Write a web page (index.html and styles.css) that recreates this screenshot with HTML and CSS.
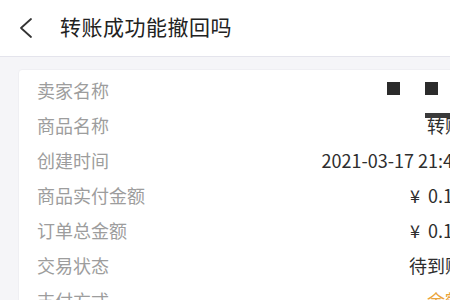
FILE: index.html
```html
<!DOCTYPE html>
<html lang="zh">
<head>
<meta charset="utf-8">
<link rel="stylesheet" href="styles.css">
</head>
<body>
<div class="page">
  <header class="topbar">
    <svg class="back" width="16" height="22" viewBox="0 0 16 22"><path d="M13 2 L3 11 L13 20" fill="none" stroke="#333" stroke-width="1.8" stroke-linecap="round" stroke-linejoin="round"/></svg>
    <h1 class="title">转账成功能撤回吗</h1>
  </header>
  <main class="content">
    <section class="card">
      <div class="row"><span class="label">卖家名称</span><span class="value redacted"><i class="sq"></i><i class="sq"></i><i class="sq"></i></span></div>
      <div class="row"><span class="label">商品名称</span><span class="value masked">转账</span></div>
      <div class="row"><span class="label">创建时间</span><span class="value">2021-03-17 21:45</span></div>
      <div class="row"><span class="label">商品实付金额</span><span class="value money">¥ 0.10</span></div>
      <div class="row"><span class="label">订单总金额</span><span class="value money">¥ 0.10</span></div>
      <div class="row"><span class="label">交易状态</span><span class="value">待到账</span></div>
      <div class="row"><span class="label">支付方式</span><span class="value accent">余额</span></div>
    </section>
  </main>
</div>
</body>
</html>
```

FILE: styles.css
```css
html, body {
  margin: 0;
  padding: 0;
  background: #f5f5f8;
}
.page {
  width: 450px;
  height: 300px;
  overflow: hidden;
  font-family: "Noto Sans CJK SC", "Noto Sans", sans-serif;
  background: #f5f5f8;
}
.topbar {
  height: 56px;
  background: #ffffff;
  border-bottom: 1px solid #e4e4ec;
  display: flex;
  align-items: center;
  padding-left: 18px;
}
.back {
  display: block;
  margin-top: -1px;
}
.title {
  margin: -3px 0 0 26px;
  font-size: 21px;
  font-weight: 400;
  color: #222;
  letter-spacing: 0.5px;
  line-height: 1;
}
.content {
  padding: 12px 0 0 18px;
}
.card {
  width: 464px;
  box-sizing: border-box;
  background: #fff;
  border: 1px solid #efeff3;
  border-radius: 4px;
  padding: 3px 18px 0 18px;
}
.row {
  display: flex;
  justify-content: space-between;
  align-items: center;
  height: 35px;
  font-size: 18px;
  line-height: 35px;
}
.label {
  color: #9d9d9d;
}
.value {
  color: #2e2e2e;
  white-space: nowrap;
}
.money {
  word-spacing: 4px;
}
.accent {
  color: #eaa43c;
}
.redacted {
  display: flex;
  gap: 25px;
  align-items: center;
  margin-top: -4px;
  margin-right: -13px;
}
.sq {
  display: block;
  width: 13px;
  height: 13px;
  background: #2b2b2b;
}
.masked {
  position: relative;
}
.masked::before {
  content: "";
  position: absolute;
  left: -2px;
  right: -10px;
  top: 5px;
  height: 5px;
  background: #3a3a3a;
}
```
